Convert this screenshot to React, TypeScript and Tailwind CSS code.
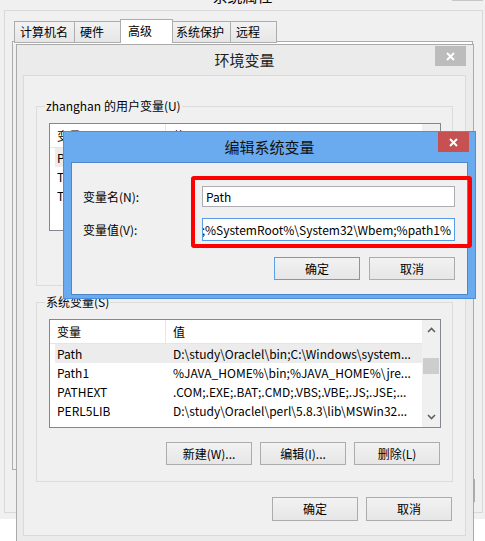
import clsx from "clsx";

const ui = "font-['Microsoft_YaHei_UI','Noto_Sans_CJK_SC',sans-serif]";

type Row = [string, string];

const userVars: Row[] = [
  ["PATH", "C:\\Users\\zhanghan\\AppData\\Local\\..."],
  ["TEMP", "%USERPROFILE%\\AppData\\Local\\Temp"],
  ["TMP", "%USERPROFILE%\\AppData\\Local\\Temp"],
];

const sysVars: Row[] = [
  ["Path", "D:\\study\\Oraclel\\bin;C:\\Windows\\system..."],
  ["Path1", "%JAVA_HOME%\\bin;%JAVA_HOME%\\jre..."],
  ["PATHEXT", ".COM;.EXE;.BAT;.CMD;.VBS;.VBE;.JS;.JSE;..."],
  ["PERL5LIB", "D:\\study\\Oraclel\\perl\\5.8.3\\lib\\MSWin32..."],
];

const tabs = [
  { label: "计算机名", cls: "w-[61px] pl-[5px]" },
  { label: "硬件", cls: "w-[47px] pl-[5px]" },
  { label: "高级", cls: "w-[53px] pl-[7px]", active: true },
  { label: "系统保护", cls: "w-[59px] pl-[3px]" },
  { label: "远程", cls: "w-[47px] pl-[5px]" },
];

function Button({ label, primary, className }: { label: string; primary?: boolean; className?: string }) {
  return (
    <div
      className={clsx(
        "flex h-[23px] w-[86px] shrink-0 items-center justify-center border bg-linear-to-b from-[#f2f2f2] to-[#e6e6e6] text-[12px] text-black",
        primary ? "border-[#5b9fe6]" : "border-[#acacac]",
        className
      )}
    >
      {label}
    </div>
  );
}

function Chevron({ up }: { up?: boolean }) {
  return (
    <svg width="9" height="6" viewBox="0 0 9 6">
      <path d={up ? "M1 5 L4.5 1.5 L8 5" : "M1 1 L4.5 4.5 L8 1"} stroke="#606060" strokeWidth="1.6" fill="none" />
    </svg>
  );
}

function CloseX() {
  return (
    <svg width="9" height="9" viewBox="0 0 9 9">
      <path d="M1 1 L8 8 M8 1 L1 8" stroke="#fff" strokeWidth="2" />
    </svg>
  );
}

function VarList({ rows, className }: { rows: Row[]; className?: string }) {
  return (
    <div className={clsx("flex w-[392px] border border-[#828790] bg-white text-[12px] text-black", className)}>
      <div className="flex min-w-0 flex-1 flex-col">
        <div className="flex h-[24px] shrink-0 items-center border-b border-[#e5e5e5]">
          <div className="h-full w-[116px] border-r border-[#e3e8ef] pl-[7px] leading-[24px]">变量</div>
          <div className="pl-[7px]">值</div>
        </div>
        {rows.map(([name, value], i) => (
          <div key={name} className={clsx("ml-[5px] flex h-[19px] items-center", i === 0 && "bg-[#ececec]")}>
            <div className="w-[111px] shrink-0 pl-[2px]">{name}</div>
            <div className="min-w-0 flex-1 overflow-hidden whitespace-nowrap pl-[7px]">{value}</div>
          </div>
        ))}
      </div>
      <div className="flex w-[18px] shrink-0 flex-col bg-[#f0f0f0]">
        <div className="flex h-[20px] items-center justify-center">
          <Chevron up />
        </div>
        <div className="flex-1 px-[1px] pt-[18px]">
          <div className="h-[16px] bg-[#cdcdcd]" />
        </div>
        <div className="flex h-[20px] items-center justify-center">
          <Chevron />
        </div>
      </div>
    </div>
  );
}

function Group({ label, rows, listH, buttons }: { label: string; rows: Row[]; listH: string; buttons: string[] }) {
  return (
    <div className="relative h-[180px] shrink-0 border border-[#dcdcdc] pl-[12px] pr-[11px] pt-[16px]">
      <div className="absolute left-[8px] top-[-9px] bg-[#f0f0f0] px-[1px] text-[12px] leading-[16px]">{label}</div>
      <VarList rows={rows} className={listH} />
      <div className="mt-[14px] flex justify-end gap-[8px] pr-[1px]">
        {buttons.map((b) => (
          <Button key={b} label={b} />
        ))}
      </div>
    </div>
  );
}

export default function App() {
  return (
    <div className={clsx("relative h-[541px] w-[485px] overflow-hidden bg-white text-black", ui)}>
      {/* 系统属性 */}
      <div className="absolute left-0 top-0 h-[519px] w-[485px] bg-[#f0f0f0]">
        <div className="absolute left-[452px] top-[-22px] h-[23px] w-[31px] bg-[#c7c7c7]" />
        <div className="absolute left-0 top-[-13px] w-full text-center text-[15px] leading-[17px]">系统属性</div>
        <div className="absolute left-[4px] top-[10px] h-[503px] w-[479px] border border-[#d9d9d9]" />
        <div className="absolute left-[12px] top-[41px] h-[429px] w-[461px] border border-[#acacac] bg-[#f0f0f0]">
          <div className="h-[2px] bg-white" />
        </div>
        <div className="absolute left-[14px] top-[19px] flex items-end">
          {tabs.map((t) => (
            <div
              key={t.label}
              className={clsx(
                "-ml-px flex items-center border border-[#acacac] text-[12px] first:ml-0",
                t.cls,
                t.active
                  ? "relative z-10 h-[24px] border-b-0 bg-white pb-[2px]"
                  : "h-[22px] bg-linear-to-b from-[#f2f2f2] to-[#e6e6e6]"
              )}
            >
              {t.label}
            </div>
          ))}
        </div>
        <div className="absolute left-[201px] top-[479px] flex gap-[8px]">
          <Button label="确定" />
          <Button label="取消" />
          <Button label="应用(A)" />
        </div>
      </div>

      {/* 环境变量 */}
      <div className="absolute left-[16px] top-[44px] flex h-[505px] w-[458px] flex-col border border-[#aaaaaa] bg-[#ebebeb] pl-[6px] pr-[7px]">
        <div className="relative flex h-[30px] shrink-0 items-center justify-center text-[15px] text-[#222]">
          环境变量
          <div className="absolute right-0 top-[1px] flex h-[20px] w-[31px] items-center justify-center bg-[#bcbcbc]">
            <CloseX />
          </div>
        </div>
        <div className="flex h-[461px] flex-col border border-[#dadada] bg-[#f0f0f0] px-[12px] pt-[30px]">
          <Group
            label="zhanghan 的用户变量(U)"
            rows={userVars}
            listH="h-[108px]"
            buttons={["新建(N)...", "编辑(E)...", "删除(D)"]}
          />
          <div className="mt-[16px]">
            <Group
              label="系统变量(S)"
              rows={sysVars}
              listH="h-[109px]"
              buttons={["新建(W)...", "编辑(I)...", "删除(L)"]}
            />
          </div>
          <div className="mt-[15px] flex justify-end gap-[8px] pr-[1px]">
            <Button label="确定" className="h-[24px]" />
            <Button label="取消" className="h-[24px]" />
          </div>
        </div>
      </div>

      {/* 编辑系统变量 */}
      <div className="absolute left-[63px] top-[131px] flex h-[168px] w-[413px] flex-col border border-[#4d90d9] bg-[#6aabf0] px-[7px] pb-[3px]">
        <div className="relative flex h-[30px] shrink-0 items-center justify-center text-[15px] text-[#111]">
          编辑系统变量
          <div className="absolute right-[-1px] top-0 flex h-[20px] w-[31px] items-center justify-center bg-[#c75050]">
            <CloseX />
          </div>
        </div>
        <div className="flex flex-1 flex-col border border-[#4f87c9] bg-[#f0f0f0] pl-[11px] pr-[12px] pt-[23px] text-[12px]">
          <div className="flex h-[21px] items-center">
            <div className="w-[119px] shrink-0">变量名(N):</div>
            <div className="flex h-full w-[253px] items-center border border-[#abadb3] bg-white pl-[3px]">Path</div>
          </div>
          <div className="mt-[11px] flex h-[23px] items-center">
            <div className="w-[119px] shrink-0">变量值(V):</div>
            <div className="flex h-full w-[253px] items-center justify-end overflow-hidden whitespace-nowrap border border-[#569de5] bg-white pr-[3px]">
              %SystemRoot%;%SystemRoot%\System32\Wbem;%path1%
            </div>
          </div>
          <div className="mt-[16px] flex justify-end gap-[9px]">
            <Button label="确定" primary />
            <Button label="取消" />
          </div>
        </div>
      </div>

      {/* 标注框 */}
      <div className="absolute left-[191px] top-[176px] h-[72px] w-[281px] rounded-[3px] border-[4px] border-[#ff0000]" />
    </div>
  );
}
